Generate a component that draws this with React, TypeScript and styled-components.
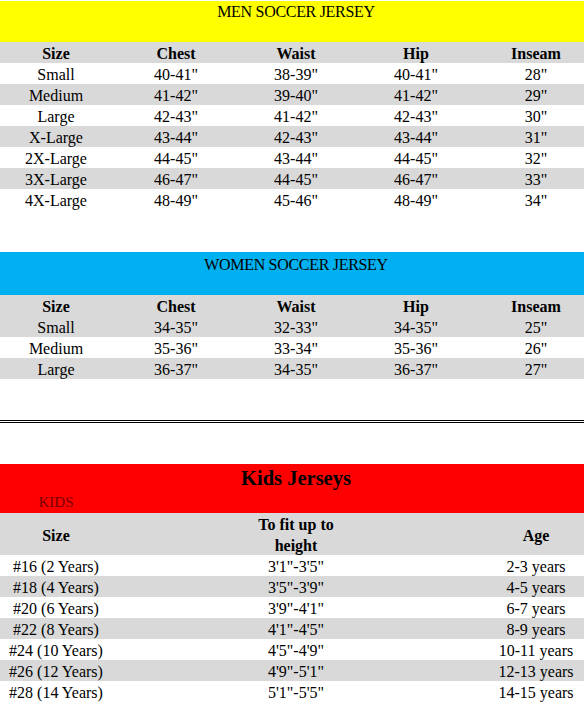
import React from "react";
import styled, { createGlobalStyle } from "styled-components";

const GlobalStyle = createGlobalStyle`
  html, body {
    margin: 0;
    padding: 0;
    background: #ffffff;
    overflow: hidden;
  }
  body {
    font-family: "Liberation Serif", "Times New Roman", serif;
    color: #000000;
  }
`;

const Page = styled.div`
  width: 600px;
  margin-left: -4px;
  padding-top: 1px;
  display: flex;
  flex-direction: column;
`;

const Band = styled.div<{ $bg: string; $height: number; $pad?: number }>`
  background: ${(p) => p.$bg};
  height: ${(p) => p.$height}px;
  padding-top: ${(p) => p.$pad ?? 0}px;
  box-sizing: border-box;
  display: flex;
  flex-direction: column;
`;

const BandTitle = styled.div`
  font-size: 16px;
  line-height: 21px;
  letter-spacing: -0.3px;
  text-align: center;
`;

const KidsTitle = styled.div`
  font-size: 20.5px;
  font-weight: bold;
  line-height: 26px;
  padding-top: 1px;
  text-align: center;
`;

const Row = styled.div<{ $cols: string; $shade?: boolean; $height?: number }>`
  display: grid;
  grid-template-columns: ${(p) => p.$cols};
  background: ${(p) => (p.$shade ? "#d9d9d9" : "transparent")};
  height: ${(p) => p.$height ?? 21}px;
  box-sizing: border-box;
  padding-top: 1px;
  align-items: start;
`;

const Cell = styled.div<{ $bold?: boolean; $middle?: boolean }>`
  font-size: 16px;
  line-height: 21px;
  font-weight: ${(p) => (p.$bold ? "bold" : "normal")};
  text-align: center;
  white-space: nowrap;
  align-self: ${(p) => (p.$middle ? "center" : "start")};
`;

const KidsLabel = styled.div`
  font-size: 15px;
  line-height: 21px;
  color: #7a0000;
  text-align: center;
`;

const Spacer = styled.div<{ $h: number }>`
  height: ${(p) => p.$h}px;
`;

const DoubleRule = styled.div`
  height: 1px;
  border-top: 1px solid #000;
  border-bottom: 1px solid #000;
`;

const ADULT_COLS = "repeat(5, 120px)";
const KIDS_COLS = "120px 360px 120px";

const menRows = [
  ["Small", '40-41"', '38-39"', '40-41"', '28"'],
  ["Medium", '41-42"', '39-40"', '41-42"', '29"'],
  ["Large", '42-43"', '41-42"', '42-43"', '30"'],
  ["X-Large", '43-44"', '42-43"', '43-44"', '31"'],
  ["2X-Large", '44-45"', '43-44"', '44-45"', '32"'],
  ["3X-Large", '46-47"', '44-45"', '46-47"', '33"'],
  ["4X-Large", '48-49"', '45-46"', '48-49"', '34"'],
];

const womenRows = [
  ["Small", '34-35"', '32-33"', '34-35"', '25"'],
  ["Medium", '35-36"', '33-34"', '35-36"', '26"'],
  ["Large", '36-37"', '34-35"', '36-37"', '27"'],
];

const kidsRows = [
  ["#16 (2 Years)", `3'1"-3'5"`, "2-3 years"],
  ["#18 (4 Years)", `3'5"-3'9"`, "4-5 years"],
  ["#20 (6 Years)", `3'9"-4'1"`, "6-7 years"],
  ["#22 (8 Years)", `4'1"-4'5"`, "8-9 years"],
  ["#24 (10 Years)", `4'5"-4'9"`, "10-11 years"],
  ["#26 (12 Years)", `4'9"-5'1"`, "12-13 years"],
  ["#28 (14 Years)", `5'1"-5'5"`, "14-15 years"],
];

const headers = ["Size", "Chest", "Waist", "Hip", "Inseam"];

function AdultTable({ rows, firstShaded }: { rows: string[][]; firstShaded: boolean }) {
  return (
    <>
      <Row $cols={ADULT_COLS} $shade>
        {headers.map((h) => (
          <Cell key={h} $bold>
            {h}
          </Cell>
        ))}
      </Row>
      {rows.map((r, i) => (
        <Row key={r[0]} $cols={ADULT_COLS} $shade={firstShaded ? i % 2 === 0 : i % 2 === 1}>
          {r.map((c, j) => (
            <Cell key={j}>{c}</Cell>
          ))}
        </Row>
      ))}
    </>
  );
}

export default function App() {
  return (
    <>
      <GlobalStyle />
      <Page>
        <Band $bg="#ffff00" $height={41}>
          <BandTitle>MEN SOCCER JERSEY</BandTitle>
        </Band>
        <AdultTable rows={menRows} firstShaded={false} />
        <Spacer $h={42} />
        <Band $bg="#00b0f0" $height={43} $pad={2}>
          <BandTitle>WOMEN SOCCER JERSEY</BandTitle>
        </Band>
        <AdultTable rows={womenRows} firstShaded={true} />
        <Spacer $h={41} />
        <DoubleRule />
        <Spacer $h={41} />
        <Band $bg="#ff0000" $height={49}>
          <KidsTitle>Kids Jerseys</KidsTitle>
          <Row $cols={KIDS_COLS}>
            <KidsLabel>KIDS</KidsLabel>
          </Row>
        </Band>
        <Row $cols={KIDS_COLS} $shade $height={42}>
          <Cell $bold $middle>Size</Cell>
          <Cell $bold>
            To fit up to
            <br />
            height
          </Cell>
          <Cell $bold $middle>Age</Cell>
        </Row>
        {kidsRows.map((r, i) => (
          <Row key={r[0]} $cols={KIDS_COLS} $shade={i % 2 === 1}>
            {r.map((c, j) => (
              <Cell key={j}>{c}</Cell>
            ))}
          </Row>
        ))}
      </Page>
    </>
  );
}
